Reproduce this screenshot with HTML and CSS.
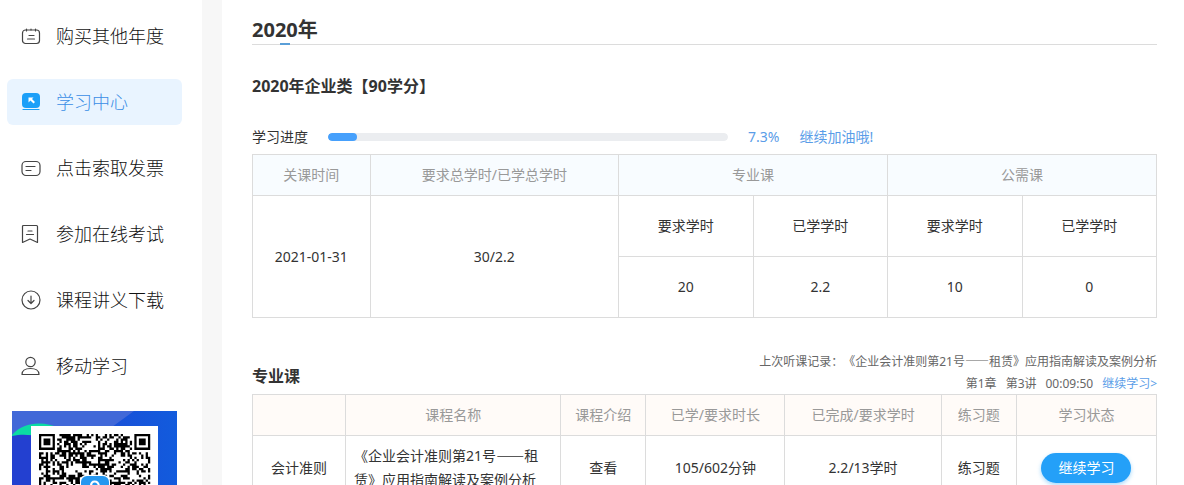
FILE: index.html
```html
<!DOCTYPE html>
<html lang="zh-CN">
<head>
    <meta charset="UTF-8">
    <meta name="viewport" content="width=device-width, initial-scale=1.0">
    <title>学习中心</title>
    <link rel="stylesheet" href="styles.css">
</head>
<body>

<div class="page">
    <aside class="sidebar">
        <nav class="menu">
            <a class="menu-item" href="#">
                <svg class="icon" viewBox="0 0 20 20"><rect x="1.5" y="4" width="17" height="13.500" rx="3"/><path d="M5.500 3v2M10 3v1M14.500 3v2M8 9.500h5M6.500 13h7"/></svg>
                <span>购买其他年度</span>
            </a>
            <a class="menu-item active" href="#">
                <svg class="icon" viewBox="0 0 20 20"><rect class="solid" x="1" y="1" width="18" height="15" rx="4"/><path class="blue-line" d="M2 17.5h16"/><path class="arrow" d="M7.500 5.500h5l-1.500 1.500 3 3-1.500 1.500-3-3L7.500 10.500z"/></svg>
                <span>学习中心</span>
            </a>
            <a class="menu-item" href="#">
                <svg class="icon" viewBox="0 0 20 20"><rect x="1" y="3.500" width="18" height="14" rx="4"/><path d="M5 8.500h9M5 12.500h5"/></svg>
                <span>点击索取发票</span>
            </a>
            <a class="menu-item" href="#">
                <svg class="icon" viewBox="0 0 20 20"><path d="M1.500 2.500q0-1 1-1h13q1 0 1 1v16L9 15l-7.500 3.500z"/><path d="M7 7h4M5.500 10.500h7"/></svg>
                <span>参加在线考试</span>
            </a>
            <a class="menu-item" href="#">
                <svg class="icon" viewBox="0 0 20 20"><circle cx="10" cy="10" r="9"/><path d="M10 6v7.500M7 10.500l3 3 3-3"/></svg>
                <span>课程讲义下载</span>
            </a>
            <a class="menu-item" href="#">
                <svg class="icon" viewBox="0 0 20 20"><circle cx="9.500" cy="6" r="4.700"/><path d="M1 18.500c0-4 3.500-6 8.500-6s8.500 2 8.500 6z"/></svg>
                <span>移动学习</span>
            </a>
        </nav>
        <svg class="qr-banner" viewBox="0 0 165 165" role="img" aria-label="二维码">
            <defs>
                <linearGradient id="bg" x1="0" x2="1">
                    <stop offset="0" stop-color="#2340d0"/>
                    <stop offset="1" stop-color="#125bdd"/>
                </linearGradient>
            </defs>
            <rect width="165" height="165" fill="url(#bg)"/>
            <path d="M0 0h122L100 16 60 50H0z" fill="#4168d8"/>
            <path d="M0 24C12 10 32 10 48 17v13C30 22 14 23 0 27z" fill="#0bdca3"/>
            <path d="M0 25C15 22 26 24 40 34v131H0z" fill="#2340d0"/>
            <rect x="19" y="15" width="127" height="150" fill="#fff"/>
            <g id="qr" transform="translate(27 23) scale(2.270)"></g>
            <rect x="68" y="64" width="30" height="30" rx="6" fill="#fff"/>
            <rect x="69" y="65" width="28" height="28" rx="6" fill="#2497f0"/>
            <path d="M79 75c0-6 7-6 8 0M79 73c0 5 7 3 9 8" fill="none" stroke="#fff" stroke-width="2"/>
        </svg>
    </aside>

    <main class="content">
        <div class="year-bar"><h1>2020年</h1></div>
        <h2>2020年企业类【90学分】</h2>

        <div class="progress-row">
            <label for="progress">学习进度</label>
            <progress id="progress" max="100" value="7.3"></progress>
            <span class="blue">7.3%</span>
            <span class="blue">继续加油哦!</span>
        </div>

        <table class="summary">
            <colgroup>
                <col class="w-date"><col class="w-total"><col><col><col><col>
            </colgroup>
            <thead>
                <tr>
                    <th>关课时间</th>
                    <th>要求总学时/已学总学时</th>
                    <th colspan="2">专业课</th>
                    <th colspan="2">公需课</th>
                </tr>
            </thead>
            <tbody>
                <tr>
                    <td rowspan="2">2021-01-31</td>
                    <td rowspan="2">30/2.2</td>
                    <td>要求学时</td>
                    <td>已学学时</td>
                    <td>要求学时</td>
                    <td>已学学时</td>
                </tr>
                <tr>
                    <td>20</td>
                    <td>2.2</td>
                    <td>10</td>
                    <td>0</td>
                </tr>
            </tbody>
        </table>

        <div class="section-head">
            <h3>专业课</h3>
            <div class="record">
                <p>上次听课记录：《企业会计准则第21号<span class="dash">——</span>租赁》应用指南解读及案例分析</p>
                <p class="record-detail"><span>第1章</span><span>第3讲</span><span>00:09:50</span><a class="blue" href="#">继续学习&gt;</a></p>
            </div>
        </div>

        <table class="courses">
            <colgroup>
                <col class="w-type"><col class="w-name"><col class="w-intro"><col class="w-time"><col class="w-done"><col class="w-quiz"><col>
            </colgroup>
            <thead>
                <tr>
                    <th></th>
                    <th>课程名称</th>
                    <th>课程介绍</th>
                    <th>已学/要求时长</th>
                    <th>已完成/要求学时</th>
                    <th>练习题</th>
                    <th>学习状态</th>
                </tr>
            </thead>
            <tbody>
                <tr>
                    <td>会计准则</td>
                    <td class="name">《企业会计准则第21号<span class="dash">——</span>租赁》应用指南解读及案例分析</td>
                    <td><a href="#">查看</a></td>
                    <td>105/602分钟</td>
                    <td>2.2/13学时</td>
                    <td><a href="#">练习题</a></td>
                    <td><button type="button" class="btn">继续学习</button></td>
                </tr>
            </tbody>
        </table>
    </main>
</div>

<script src="qr.js"></script>
</body>
</html>
```
FILE: styles.css
```css
* {
    box-sizing: border-box;
}

body {
    margin: 0;
    background: #fff;
    color: #333;
    font-family: "Noto Sans", "Noto Sans CJK SC", sans-serif;
    font-size: 14px;
    line-height: 24px;
    text-spacing-trim: space-all;
}

h1, h2, h3, p {
    margin: 0;
}

a {
    color: inherit;
    text-decoration: none;
}

.blue {
    color: #5a9de8;
}

.dash {
    font-family: "Noto Sans CJK SC", sans-serif;
    font-weight: 500;
    line-height: 1;
}

.page {
    display: flex;
    min-height: 100vh;
}

/* 左侧菜单 */
.sidebar {
    flex: 0 0 222px;
    padding: 13px 20px 20px 7px;
    border-right: 20px solid #f7f7f7;
}

.menu {
    display: flex;
    flex-direction: column;
    gap: 20px;
}

.menu-item {
    display: flex;
    align-items: center;
    gap: 15px;
    height: 46px;
    padding: 0 14px;
    border-radius: 6px;
    color: #111;
    font-size: 18px;
    font-weight: 300;
}

.menu-item.active {
    background: #e9f4ff;
    color: #3a8ee6;
}

.icon {
    width: 20px;
    height: 20px;
    fill: none;
    stroke: #444;
    stroke-width: 1.2;
    stroke-linecap: round;
    stroke-linejoin: round;
}

.icon .solid {
    fill: #1c9ff8;
    stroke: none;
}

.icon .blue-line {
    stroke: #1c9ff8;
}

.icon .arrow {
    fill: #fff;
    stroke: none;
}

.qr-banner {
    display: block;
    width: 165px;
    margin: 22px 5px 0;
}

/* 右侧内容 */
.content {
    flex: 1;
    min-width: 0;
    padding: 14px 27px 30px 30px;
}

.year-bar {
    border-bottom: 1px solid #dcdcdc;
}

.year-bar h1 {
    position: relative;
    display: inline-block;
    height: 30px;
    font-size: 20px;
    line-height: 32px;
    vertical-align: top;
}

.year-bar h1::after {
    content: "";
    position: absolute;
    left: 50%;
    bottom: -1px;
    width: 10px;
    height: 2px;
    margin-left: -5px;
    background: #5a9fd8;
}

h2, h3 {
    font-size: 16px;
}

h2 {
    margin-top: 29px;
}

.progress-row {
    display: flex;
    align-items: center;
    gap: 20px;
    margin: 27px 0 5px;
}

progress {
    width: 400px;
    height: 8px;
    appearance: none;
    border: 0;
    border-radius: 4px;
    overflow: hidden;
}

progress::-webkit-progress-bar {
    background: #ebedf0;
    border-radius: 4px;
}

progress::-webkit-progress-value {
    background: #46a0fc;
    border-radius: 4px;
}

/* 表格 */
table {
    width: 100%;
    table-layout: fixed;
    border-collapse: collapse;
    text-align: center;
}

th, td {
    padding: 8px;
    border: 1px solid #dcdcdc;
}

th {
    height: 41px;
    padding: 0;
    color: #999;
    font-weight: normal;
}

.summary th {
    background: #f8fcff;
}

.summary td {
    height: 61px;
}

.w-date { width: 13%; }
.w-total { width: 27.5%; }

.section-head {
    display: flex;
    justify-content: space-between;
    align-items: flex-end;
    margin-top: 33px;
}

.section-head h3 {
    padding-bottom: 6px;
}

.record {
    height: 43px;
    color: #666;
    font-size: 12px;
    line-height: 22px;
    text-align: right;
}

.record-detail {
    display: flex;
    justify-content: flex-end;
    gap: 9px;
}

.courses th {
    background: #fffbf8;
}

.courses .name {
    text-align: left;
}

.w-type { width: 10.3%; }
.w-name { width: 23.8%; }
.w-intro { width: 9.4%; }
.w-time { width: 15.4%; }
.w-done { width: 17.3%; }
.w-quiz { width: 8.3%; }

.btn {
    height: 30px;
    padding: 0 17px;
    border: 0;
    border-radius: 15px;
    background: #24a0f8;
    box-shadow: 0 2px 4px rgba(36, 160, 248, 0.4);
    color: #fff;
    font: inherit;
    cursor: pointer;
}
```
FILE: qr.js
```js
const SIZE = 49;
const corners = [[0, 0], [SIZE - 7, 0], [0, SIZE - 7]];
let seed = 77;

function nextBit() {
    seed = (seed * 16807) % 2147483647;
    return seed / 2147483647 > 0.48;
}

function finder(x, y) {
    for (const [cx, cy] of corners) {
        const dx = Math.abs(x - cx - 3);
        const dy = Math.abs(y - cy - 3);
        const ring = Math.max(dx, dy);
        if (ring <= 4) return ring === 3 || ring <= 1;
    }
    return null;
}

let d = "";
for (let y = 0; y < SIZE; y++) {
    for (let x = 0; x < SIZE; x++) {
        const random = nextBit();
        const fixed = finder(x, y);
        if (fixed === null ? random : fixed) d += `M${x} ${y}h1v1h-1z`;
    }
}

const path = document.createElementNS("http://www.w3.org/2000/svg", "path");
path.setAttribute("d", d);
document.getElementById("qr").appendChild(path);
```
